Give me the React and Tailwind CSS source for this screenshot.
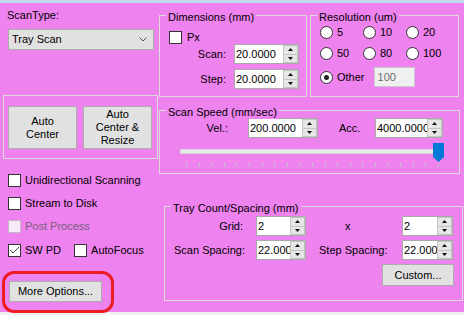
import React from 'react'

// small WinForms-like controls

const Arrow = ({ up }) => (
  <svg width="5" height="3" viewBox="0 0 5 3">
    <polygon points={up ? '2.5,0 5,3 0,3' : '0,0 5,0 2.5,3'} fill="#111" />
  </svg>
)

const NumBox = ({ value, className }) => (
  <div className={`flex h-[20px] border border-[#a9a9a9] bg-white ${className}`}>
    <div className="flex-1 overflow-hidden whitespace-nowrap pl-[1px] flex items-center">{value}</div>
    <div className="w-[15px] flex flex-col">
      <div className="flex-1 flex items-center justify-center bg-[#e6e6e6] border border-[#c4c4c4]">
        <Arrow up />
      </div>
      <div className="flex-1 flex items-center justify-center bg-[#e6e6e6] border border-[#c4c4c4] border-t-0">
        <Arrow />
      </div>
    </div>
  </div>
)

const Check = ({ label, checked, disabled, className = '' }) => (
  <div className={`flex items-center h-[13px] ${className}`}>
    <div
      className={`w-[13px] h-[13px] border flex items-center justify-center ${
        disabled ? 'border-[#c9b7c9] bg-[#f6eaf6]' : 'border-[#333333] bg-white'
      }`}
    >
      {checked && (
        <svg width="11" height="11" viewBox="0 0 11 11">
          <polyline points="1,5 4,8 10,2" fill="none" stroke="#444" strokeWidth="1" />
        </svg>
      )}
    </div>
    <span className={`ml-[4px] whitespace-nowrap ${disabled ? 'text-[#7a5f7a]' : ''}`}>{label}</span>
  </div>
)

const Radio = ({ label, checked }) => (
  <div className="flex items-center">
    <div className="w-[13px] h-[13px] rounded-full border border-[#333333] bg-white flex items-center justify-center">
      {checked && <div className="w-[5px] h-[5px] rounded-full bg-[#222222]" />}
    </div>
    <span className="ml-[4px]">{label}</span>
  </div>
)

const Group = ({ title, className = '', children }) => (
  <div className={`relative border border-[#dcdcdc] ${className}`}>
    {title && (
      <span className="absolute top-[-5px] left-[6px] px-[2px] bg-[#ee82ee] whitespace-nowrap">{title}</span>
    )}
    {children}
  </div>
)

const Btn = ({ children, className = '' }) => (
  <div
    className={`bg-[#e1e1e1] border border-[#adadad] flex items-center justify-center text-center ${className}`}
  >
    {children}
  </div>
)

const App = () => {
  const ticks = Array.from({ length: 21 })

  return (
    <div className="relative w-[464px] h-[315px] overflow-hidden bg-[#ee82ee] text-black text-[11px] leading-[13px] font-['Liberation_Sans',Arial,sans-serif] flex flex-col">
      <div className="h-[3px] bg-[#c6daef]" />

      <div className="flex h-[309px]">
        {/* Left column */}
        <div className="w-[159px] flex flex-col">
          <div className="mt-[6px] pl-[7px]">ScanType:</div>
          <div className="mt-[7px] ml-[8px] w-[146px] h-[21px] bg-[#e1e1e1] border border-[#adadad] flex items-center justify-between pl-[3px] pr-[6px]">
            <span>Tray Scan</span>
            <svg width="8" height="5" viewBox="0 0 8 5">
              <polyline points="0.5,0.5 4,4 7.5,0.5" fill="none" stroke="#555" strokeWidth="1" />
            </svg>
          </div>

          <Group className="mt-[45px] ml-[3px] w-[155px] h-[64px]">
            <div className="flex gap-[6px] pt-[10px] pl-[4px]">
              <Btn className="w-[69px] h-[43px]">
                Auto
                <br />
                Center
              </Btn>
              <Btn className="w-[69px] h-[43px]">
                Auto
                <br />
                Center &amp;
                <br />
                Resize
              </Btn>
            </div>
          </Group>

          <Check className="mt-[15px] ml-[8px]" label="Unidirectional Scanning" />
          <Check className="mt-[10px] ml-[8px]" label="Stream to Disk" />
          <Check className="mt-[10px] ml-[8px]" label="Post Process" disabled />
          <div className="mt-[11px] ml-[8px] flex">
            <Check label="SW PD" checked />
            <Check className="ml-[13px]" label="AutoFocus" />
          </div>

          <Btn className="mt-[24px] ml-[9px] w-[93px] h-[21px]">More Options...</Btn>
        </div>

        {/* Right column */}
        <div className="w-[305px] flex flex-col">
          <div className="mt-[12px] flex gap-[3px]">
            <Group title="Dimensions (mm)" className="w-[148px] h-[82px]">
              <Check className="mt-[15px] ml-[9px]" label={<span className="ml-[1px]">Px</span>} />
              <div className="flex items-center">
                <span className="w-[66px] text-right">Scan:</span>
                <NumBox className="ml-[8px] w-[65px]" value="20.0000" />
              </div>
              <div className="mt-[5px] flex items-center">
                <span className="w-[66px] text-right">Step:</span>
                <NumBox className="ml-[8px] w-[65px]" value="20.0000" />
              </div>
            </Group>

            <Group title="Resolution (um)" className="w-[149px] h-[82px]">
              <div className="ml-[9px] mt-[10px] grid grid-cols-[43px_43px_43px] gap-y-[8px]">
                <Radio label="5" />
                <Radio label="10" />
                <Radio label="20" />
                <Radio label="50" />
                <Radio label="80" />
                <Radio label="100" />
              </div>
              <div className="ml-[9px] mt-[7px] flex items-center">
                <Radio label="Other" checked />
                <div className="ml-[9px] w-[41px] h-[20px] bg-[#f0f0f0] border border-[#cccccc] text-[#6d6d6d] flex items-center pl-[3px]">
                  100
                </div>
              </div>
            </Group>
          </div>

          <Group title="Scan Speed (mm/sec)" className="mt-[13px] w-[301px] h-[64px]">
            <div className="mt-[7px] flex items-center">
              <span className="w-[68px] text-right">Vel.:</span>
              <NumBox className="ml-[20px] w-[70px]" value="200.0000" />
              <span className="ml-[21px] w-[36px]">Acc.</span>
              <NumBox className="w-[68px]" value="4000.0000" />
            </div>
            <div className="relative mt-[5px] ml-[20px] w-[265px] h-[19px]">
              <div className="absolute left-0 right-[2px] top-[6px] h-[5px] bg-[#e7eaea] border border-[#d6d6d6]" />
              <svg className="absolute right-[1px] top-0" width="11" height="19" viewBox="0 0 11 19">
                <polygon points="0,0 11,0 11,14 5.5,19 0,14" fill="#0078d7" />
              </svg>
            </div>
            <div className="mt-[1px] ml-[26px] w-[253px] h-[4px] flex justify-between">
              {ticks.map((_, i) => (
                <div key={i} className="w-px h-[4px] bg-[#c4c4c4]" />
              ))}
            </div>
          </Group>

          <Group title="Tray Count/Spacing (mm)" className="mt-[32px] ml-[5px] w-[299px] h-[95px]">
            <div className="mt-[9px] flex items-center">
              <span className="w-[78px] text-right">Grid:</span>
              <NumBox className="ml-[13px] w-[50px]" value="2" />
              <span className="w-[96px] pl-[39px]">x</span>
              <NumBox className="w-[51px]" value="2" />
            </div>
            <div className="mt-[4px] flex items-center">
              <span className="w-[91px] pl-[9px] whitespace-nowrap">Scan Spacing:</span>
              <NumBox className="w-[50px]" value="22.0000" />
              <span className="w-[96px] pl-[13px] whitespace-nowrap">Step Spacing:</span>
              <NumBox className="w-[51px]" value="22.0000" />
            </div>
            <Btn className="mt-[4px] ml-[217px] w-[72px] h-[22px]">Custom...</Btn>
          </Group>
        </div>
      </div>

      <div className="h-[3px] bg-[#f0f0f0]" />

      {/* red annotation around More Options */}
      <div className="absolute left-[2px] top-[271px] w-[112px] h-[42px] border-[3px] border-[#ed1c24] rounded-[12px]" />
    </div>
  )
}

export default App
